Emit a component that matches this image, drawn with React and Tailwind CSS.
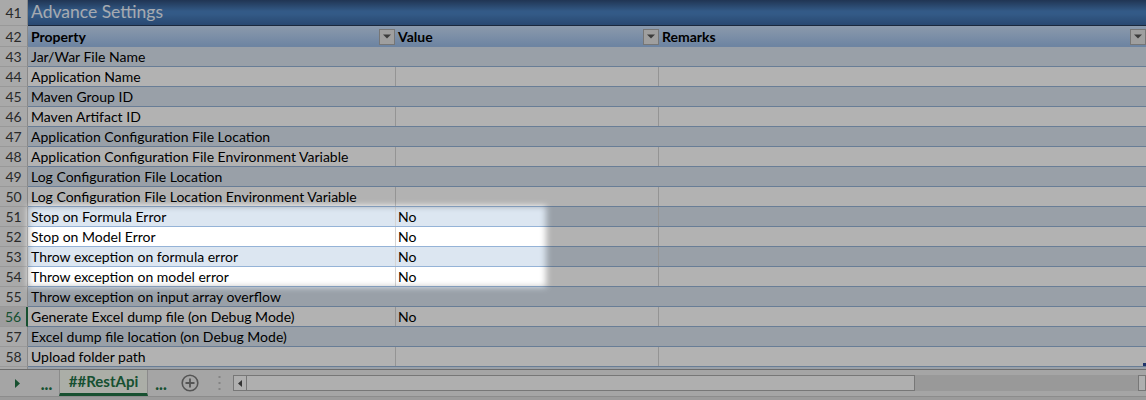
import React from "react";

const rows = [
  { n: 43, label: "Jar/War File Name", odd: true },
  { n: 44, label: "Application Name" },
  { n: 45, label: "Maven Group ID", odd: true },
  { n: 46, label: "Maven Artifact ID" },
  { n: 47, label: "Application Configuration File Location", odd: true },
  { n: 48, label: "Application Configuration File Environment Variable" },
  { n: 49, label: "Log Configuration File Location", odd: true },
  { n: 50, label: "Log Configuration File Location Environment Variable" },
  { n: 51, label: "Stop on Formula Error", value: "No", odd: true, lines: true },
  { n: 52, label: "Stop on Model Error", value: "No" },
  { n: 53, label: "Throw exception on formula error", value: "No", odd: true, lines: true },
  { n: 54, label: "Throw exception on model error", value: "No" },
  { n: 55, label: "Throw exception on input array overflow", odd: true },
  { n: 56, label: "Generate Excel dump file (on Debug Mode)", value: "No", active: true },
  { n: 57, label: "Excel dump file location (on Debug Mode)", odd: true },
  { n: 58, label: "Upload folder path", corner: true },
];

function DropBtn() {
  return (
    <div className="w-[16px] h-[16px] border border-[#a9a9a9] bg-[#e4e4e4] flex items-center justify-center shrink-0">
      <svg width="8" height="5" viewBox="0 0 8 5">
        <path d="M0 0.5 L8 0.5 L4 4.5 Z" fill="#555" />
      </svg>
    </div>
  );
}

function Row({ r }) {
  const bg = r.odd ? "bg-[#dce6f1]" : "bg-white";
  const showLines = !r.odd || r.lines;
  const vline = showLines ? "border-r-[#d4d4d4]" : "border-r-transparent";
  return (
    <div className="flex h-[20px]">
      <div
        className={
          "w-[28px] shrink-0 border-b border-b-[#dcdcdc] flex items-center justify-center text-[14px] " +
          (r.active
            ? "bg-[#e1e1e1] text-[#217346] border-r-2 border-r-[#217346]"
            : "bg-[#f3f3f3] text-[#3c3c3c] border-r border-r-[#c4c4c4]")
        }
      >
        {r.n}
      </div>
      <div className={"flex flex-1 border-b border-b-[#95b3d7] " + bg}>
        <div className={"w-[368px] shrink-0 border-r pl-[3px] flex items-center text-[14px] text-black whitespace-nowrap " + vline}>
          {r.label}
        </div>
        <div className={"w-[263px] shrink-0 border-r pl-[2px] flex items-center text-[14px] text-black " + vline}>
          {r.value || ""}
        </div>
        <div className="flex-1 relative">
          {r.corner && <div className="absolute right-0 bottom-0 w-[3px] h-[3px] bg-[#2f4a99]" />}
        </div>
      </div>
    </div>
  );
}

export default function App() {
  return (
    <div className="relative w-[1146px] h-[400px] overflow-hidden bg-[#ededed] font-['Lato',_sans-serif]">
      {/* sheet */}
      <div className="flex flex-col h-[369px] overflow-hidden">
        {/* row 41 */}
        <div className="flex h-[26px]">
          <div className="w-[28px] shrink-0 bg-[#f3f3f3] border-r border-r-[#c4c4c4] border-b border-b-[#dcdcdc] flex items-center justify-center text-[14px] text-[#3c3c3c]">
            41
          </div>
          <div className="flex-1 border-b border-b-[#263a58] bg-[linear-gradient(to_bottom,#2f4c78_0%,#4a82c2_45%,#4a82c2_55%,#3b68a2_100%)] flex items-center pl-[3px] text-[17.5px] text-[#eef4fc]">
            Advance Settings
          </div>
        </div>
        {/* row 42 header */}
        <div className="flex h-[21px]">
          <div className="w-[28px] shrink-0 bg-[#f3f3f3] border-r border-r-[#c4c4c4] border-b border-b-[#dcdcdc] flex items-center justify-center text-[14px] text-[#3c3c3c]">
            42
          </div>
          <div className="flex flex-1 bg-[linear-gradient(to_bottom,#c8dcf6,#9bbde8)] font-bold text-[14px] text-black">
            <div className="w-[368px] shrink-0 pl-[3px] pr-[1px] flex items-center justify-between">
              <span>Property</span>
              <DropBtn />
            </div>
            <div className="w-[263px] shrink-0 pl-[2px] flex items-center justify-between">
              <span>Value</span>
              <DropBtn />
            </div>
            <div className="flex-1 pl-[3px] flex items-center justify-between">
              <span>Remarks</span>
              <DropBtn />
            </div>
          </div>
        </div>
        {rows.map((r) => (
          <Row key={r.n} r={r} />
        ))}
        <div className="flex h-[20px]">
          <div className="w-[28px] shrink-0 bg-[#f3f3f3] border-r border-r-[#c4c4c4]" />
          <div className="flex flex-1 bg-[#dce6f1]" />
        </div>
      </div>

      {/* sheet tab bar */}
      <div className="flex items-stretch h-[27px] border-t border-t-[#9c9c9c] bg-[#ededed]">
        <div className="w-[34px] flex items-center justify-center">
          <svg width="6" height="9" viewBox="0 0 6 9" className="ml-[2px]">
            <path d="M0 0 L5 4.5 L0 9 Z" fill="#217346" />
          </svg>
        </div>
        <div className="w-[25px] flex items-center justify-center font-black text-[16px] text-[#217346] pt-[2px]">
          ...
        </div>
        <div className="w-[89px] bg-[#f5f9ef] border-x border-x-[#c8c8c8] border-b-[3px] border-b-[#217346] flex items-center justify-center font-bold text-[15px] text-[#217346]">
          ##RestApi
        </div>
        <div className="w-[26px] flex items-center justify-center font-black text-[16px] text-[#217346] pt-[2px]">
          ...
        </div>
        <div className="w-[32px] flex items-center justify-center">
          <svg width="18" height="18" viewBox="0 0 18 18">
            <circle cx="9" cy="9" r="7.8" fill="none" stroke="#7a7a7a" strokeWidth="1.6" />
            <path d="M9 4.5 V13.5 M4.5 9 H13.5" stroke="#7a7a7a" strokeWidth="1.8" />
          </svg>
        </div>
        <div className="w-[26px] flex items-center justify-center">
          <svg width="3" height="14" viewBox="0 0 3 14">
            <rect x="0.5" y="0" width="2" height="2" fill="#bdbdbd" />
            <rect x="0.5" y="6" width="2" height="2" fill="#bdbdbd" />
            <rect x="0.5" y="12" width="2" height="2" fill="#bdbdbd" />
          </svg>
        </div>
        <div className="flex-1 flex items-center pl-[1px]">
          <div className="flex h-[16px] w-full">
            <div className="w-[14px] h-full border border-[#ababab] bg-[#fbfbfb] flex items-center justify-center">
              <svg width="4" height="7" viewBox="0 0 4 7">
                <path d="M4 0 L0 3.5 L4 7 Z" fill="#4a4a4a" />
              </svg>
            </div>
            <div className="w-[668px] h-full border border-[#ababab] border-l-0 bg-[#fbfbfb]" />
            <div className="flex-1 h-full bg-[#dcdcdc]" />
            <div className="w-[8px] h-full border border-[#ababab] bg-[#fbfbfb]" />
          </div>
        </div>
      </div>
      <div className="h-[4px] bg-[#dfdfdf] border-t border-t-[#c9c9c9]" />

      {/* dim overlay with spotlight */}
      <div className="pointer-events-none absolute left-[-1972px] top-[-1794px] w-[4518px] h-[4081px] border-[2000px] border-black/30 blur-[3px]" />
    </div>
  );
}
